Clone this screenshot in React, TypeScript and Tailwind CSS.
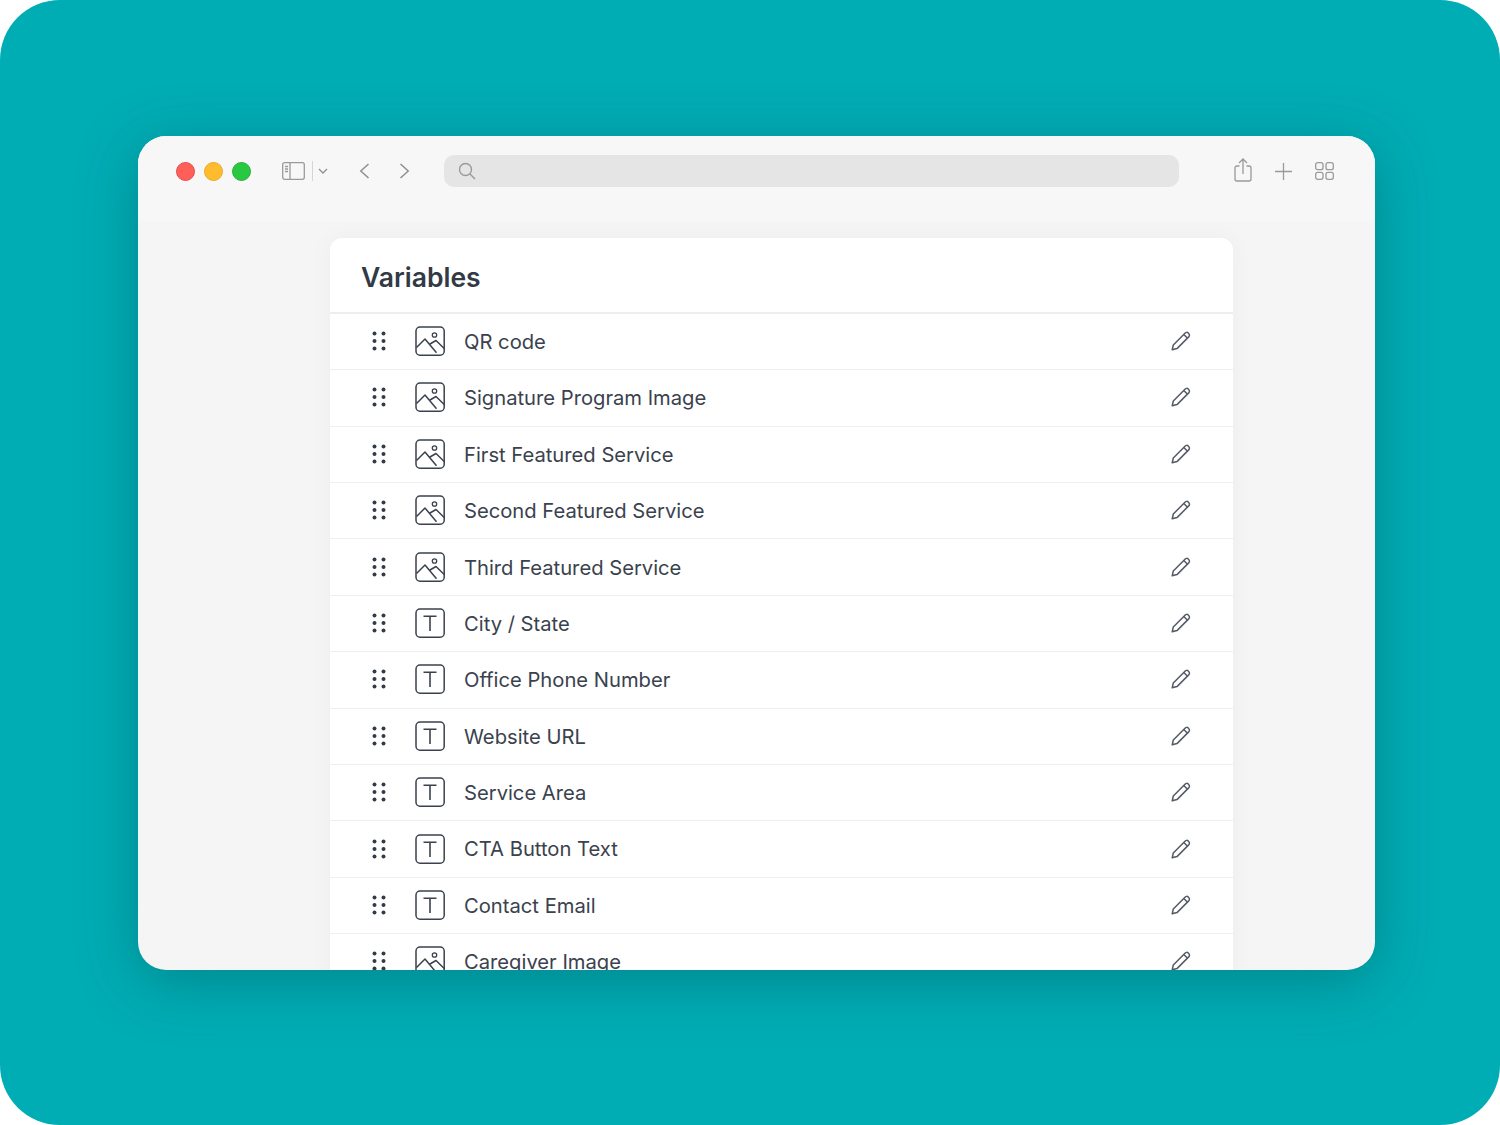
const variables = [
  { name: 'QR code', type: 'image' },
  { name: 'Signature Program Image', type: 'image' },
  { name: 'First Featured Service', type: 'image' },
  { name: 'Second Featured Service', type: 'image' },
  { name: 'Third Featured Service', type: 'image' },
  { name: 'City / State', type: 'text' },
  { name: 'Office Phone Number', type: 'text' },
  { name: 'Website URL', type: 'text' },
  { name: 'Service Area', type: 'text' },
  { name: 'CTA Button Text', type: 'text' },
  { name: 'Contact Email', type: 'text' },
  { name: 'Caregiver Image', type: 'image' },
]

function Grip() {
  return (
    <svg width="14" height="20" viewBox="0 0 14 20" fill="#333b48">
      {[2.5, 10, 17.5].map(y => (
        <g key={y}>
          <circle cx="2.5" cy={y} r="2" />
          <circle cx="11.5" cy={y} r="2" />
        </g>
      ))}
    </svg>
  )
}

function ImageIcon() {
  return (
    <svg width="30" height="30" viewBox="0 0 30 30" fill="none" stroke="#3a424e" strokeWidth="1.5">
      <rect x="1" y="1" width="28.2" height="28.2" rx="4" />
      <circle cx="19.5" cy="9" r="2.2" strokeWidth="1.3" />
      <path d="M1.5 21.5 L10 13 L21.5 26.8 M15 18 L21 14.5 L29.5 22.8" strokeLinejoin="round" />
    </svg>
  )
}

function TextIcon() {
  return (
    <svg width="30" height="30" viewBox="0 0 30 30" fill="none" stroke="#3a424e" strokeWidth="1.5">
      <rect x="1" y="1" width="28.2" height="28.2" rx="4" />
      <path d="M8.5 8.2 H21.5 M15 8.2 V23" strokeWidth="1.6" />
    </svg>
  )
}

function Pencil() {
  return (
    <svg width="20" height="20" viewBox="0 0 20 20" fill="none" stroke="#555b65" strokeWidth="1.5" strokeLinejoin="round">
      <path d="M1.2 18.8 L2.3 14 L14 2.2 C15 1.2 16.4 1 17.5 2.2 C18.8 3.4 18.7 4.9 17.7 5.9 L6 17.6 Z" />
      <path d="M12.8 3.5 L16.5 7.2" />
    </svg>
  )
}

export default function App() {
  return (
    <div className="w-[1500px] h-[1125px] bg-white" style={{ fontFamily: 'Inter, sans-serif' }}>
      <div className="w-full h-full rounded-[60px] bg-[#00adb5] pt-[136px] pl-[138px]">
        <div className="w-[1237px] h-[834px] rounded-[28px] overflow-hidden bg-[#f5f5f6] shadow-[0_12px_60px_rgba(0,70,75,0.38)] flex flex-col">
          <div className="h-[85px] shrink-0 bg-[#f7f7f8] flex items-start pt-[19px] pl-[38px] pr-[40px]">
            <div className="flex items-center gap-[9px] h-[32px]">
              <span className="w-[19px] h-[19px] rounded-full bg-[#ff5f57] border border-[#e5484d]" />
              <span className="w-[19px] h-[19px] rounded-full bg-[#febc2e] border border-[#eba825]" />
              <span className="w-[19px] h-[19px] rounded-full bg-[#28c840] border border-[#22b338]" />
            </div>
            <div className="flex items-center h-[32px] ml-[31px]">
              <svg width="23" height="18" viewBox="0 0 23 18" fill="none" stroke="#9a9a9c" strokeWidth="1.3">
                <rect x="0.7" y="0.7" width="21.6" height="16.6" rx="2" />
                <path d="M8 1 V17 M3 4.5 H6 M3 7 H6 M3 9.5 H6" />
              </svg>
              <span className="w-px h-[20px] bg-[#d6d6d6] ml-[7px]" />
              <svg className="ml-[5px]" width="10" height="6" viewBox="0 0 10 6" fill="none" stroke="#8f8f91" strokeWidth="1.3">
                <path d="M1 1 L5 5 L9 1" />
              </svg>
              <svg className="ml-[31px]" width="11" height="16" viewBox="0 0 11 16" fill="none" stroke="#8f8f91" strokeWidth="1.5">
                <path d="M9.5 1 L1.8 8 L9.5 15" />
              </svg>
              <svg className="ml-[29px]" width="11" height="16" viewBox="0 0 11 16" fill="none" stroke="#8f8f91" strokeWidth="1.5">
                <path d="M1.5 1 L9.2 8 L1.5 15" />
              </svg>
            </div>
            <div className="w-[735px] h-[32px] ml-[34px] rounded-[10px] bg-[#e5e5e6] flex items-center pl-[14px]">
              <svg width="18" height="18" viewBox="0 0 18 18" fill="none" stroke="#9a9a9c" strokeWidth="1.4">
                <circle cx="7.5" cy="7.5" r="6" />
                <path d="M12 12 L17 17" />
              </svg>
            </div>
            <div className="flex items-center h-[32px] ml-[55px]">
              <svg width="18" height="24" viewBox="0 0 18 24" fill="none" stroke="#9a9a9c" strokeWidth="1.3" className="-mt-[3px]">
                <path d="M5.5 8 H3 C1.8 8 1 8.8 1 10 V21 C1 22.2 1.8 23 3 23 H15 C16.2 23 17 22.2 17 21 V10 C17 8.8 16.2 8 15 8 H12.5" />
                <path d="M9 16 V1 M5 5 L9 1 L13 5" />
              </svg>
              <svg className="ml-[23px]" width="17" height="17" viewBox="0 0 17 17" fill="none" stroke="#9a9a9c" strokeWidth="1.3">
                <path d="M8.5 0 V17 M0 8.5 H17" />
              </svg>
              <svg className="ml-[23px]" width="19" height="18" viewBox="0 0 19 18" fill="none" stroke="#9a9a9c" strokeWidth="1.3">
                <rect x="0.7" y="0.7" width="7.3" height="7" rx="2" />
                <rect x="11" y="0.7" width="7.3" height="7" rx="2" />
                <rect x="0.7" y="10.3" width="7.3" height="7" rx="2" />
                <rect x="11" y="10.3" width="7.3" height="7" rx="2" />
              </svg>
            </div>
          </div>

          <div className="flex-1 min-h-0 pt-[17px] pl-[192px]">
            <div className="w-[903px] bg-white rounded-t-[12px] shadow-[0_0_24px_rgba(0,0,0,0.04)]">
              <div className="h-[75.9px] flex items-center pl-[31px] pt-[5px] border-b-2 border-[#eeeef1]">
                <h1 className="text-[26.5px] font-semibold text-[#323a46] leading-none">Variables</h1>
              </div>
              {variables.map(v => (
                <div key={v.name} className="h-[56.4px] flex items-center pl-[42px] pr-[42px] pb-[1px] border-b border-[#efeff1]">
                  <Grip />
                  <span className="ml-[29px]">{v.type === 'image' ? <ImageIcon /> : <TextIcon />}</span>
                  <span className="ml-[19px] pt-[2px] text-[20.2px] text-[#3a424e] whitespace-nowrap">{v.name}</span>
                  <span className="ml-auto"><Pencil /></span>
                </div>
              ))}
            </div>
          </div>
        </div>
      </div>
    </div>
  )
}
